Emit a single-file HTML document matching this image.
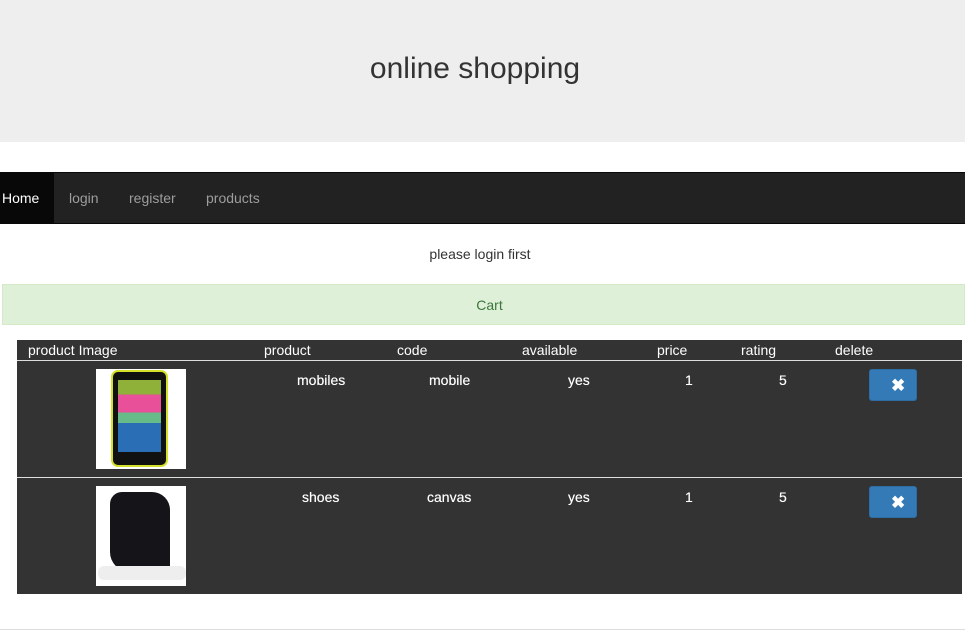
<!DOCTYPE html>
<html><head><style>
body{margin:0;width:965px;height:636px;position:relative;font-family:"Liberation Sans",sans-serif;background:#fff;overflow:hidden}
.a{position:absolute}
.t{position:absolute;color:#fff;font-size:14px;line-height:16px}
.b{position:absolute;color:#fff;font-size:14px;line-height:16px;text-shadow:0 0 0.4px #fff}
.x{position:absolute;width:48px;height:32px;background:#337ab7;border:1px solid #2e6da4;border-radius:3px;color:#fff;font-size:17px;font-weight:bold;line-height:32px;box-sizing:border-box;padding-left:21px}
</style></head><body>
<div class="a" style="left:0;top:0;width:965px;height:142px;background:#eee"></div>
<div class="a" style="left:0;top:52px;width:950px;text-align:center;font-size:30px;color:#333">online shopping</div>
<div class="a" style="left:0;top:172px;width:965px;height:50px;background:#222;border-top:1px solid #080808;border-bottom:1px solid #080808"></div>
<div class="a" style="left:0;top:173px;width:54px;height:50px;background:#080808"></div>
<div class="a" style="left:2px;top:190px;font-size:14px;color:#fff">Home</div>
<div class="a" style="left:69px;top:190px;font-size:14px;color:#9d9d9d">login</div>
<div class="a" style="left:129px;top:190px;font-size:14px;color:#9d9d9d">register</div>
<div class="a" style="left:206px;top:190px;font-size:14px;color:#9d9d9d">products</div>
<div class="a" style="left:0;top:246px;width:960px;text-align:center;font-size:14px;color:#333">please login first</div>
<div class="a" style="left:2px;top:284px;width:961px;height:39px;background:#dff0d8;border:1px solid #d6e9c6"></div>
<div class="a" style="left:2px;top:297px;width:975px;text-align:center;font-size:14px;color:#3c763d">Cart</div>
<div class="a" style="left:17px;top:340px;width:945px;height:254px;background:#333"></div>
<div class="a" style="left:17px;top:360px;width:945px;height:1px;background:#ddd"></div>
<div class="a" style="left:17px;top:477px;width:945px;height:1px;background:#ddd"></div>
<div class="t" style="left:28px;top:342px">product Image</div>
<div class="t" style="left:264px;top:342px">product</div>
<div class="t" style="left:397px;top:342px">code</div>
<div class="t" style="left:522px;top:342px">available</div>
<div class="t" style="left:657px;top:342px">price</div>
<div class="t" style="left:741px;top:342px">rating</div>
<div class="t" style="left:835px;top:342px">delete</div>

<div class="a" style="left:96px;top:369px;width:90px;height:100px;background:#fff"></div>
<div class="a" style="left:111px;top:370px;width:57px;height:97px;background:#111;border:2px solid #d4e029;border-radius:7px;box-sizing:border-box"></div>
<div class="a" style="left:118px;top:380px;width:43px;height:72px;background:linear-gradient(#8fb13a 0 20%,#e8509a 20% 45%,#6b8 45% 60%,#2a6fb5 60% 100%)"></div>
<div class="b" style="left:297px;top:372px">mobiles</div>
<div class="b" style="left:429px;top:372px">mobile</div>
<div class="b" style="left:568px;top:372px">yes</div>
<div class="b" style="left:685px;top:372px">1</div>
<div class="b" style="left:779px;top:372px">5</div>
<div class="x" style="left:869px;top:369px">✖</div>

<div class="a" style="left:96px;top:486px;width:90px;height:100px;background:#fff"></div>
<div class="a" style="left:110px;top:492px;width:60px;height:80px;background:#141419;border-radius:12px 18px 6px 20px"></div>
<div class="a" style="left:98px;top:566px;width:88px;height:14px;background:#eee;border-radius:6px"></div>
<div class="b" style="left:302px;top:489px">shoes</div>
<div class="b" style="left:427px;top:489px">canvas</div>
<div class="b" style="left:568px;top:489px">yes</div>
<div class="b" style="left:685px;top:489px">1</div>
<div class="b" style="left:779px;top:489px">5</div>
<div class="x" style="left:869px;top:486px">✖</div>

<div class="a" style="left:0;top:629px;width:965px;height:1px;background:#ddd"></div>
</body></html>
